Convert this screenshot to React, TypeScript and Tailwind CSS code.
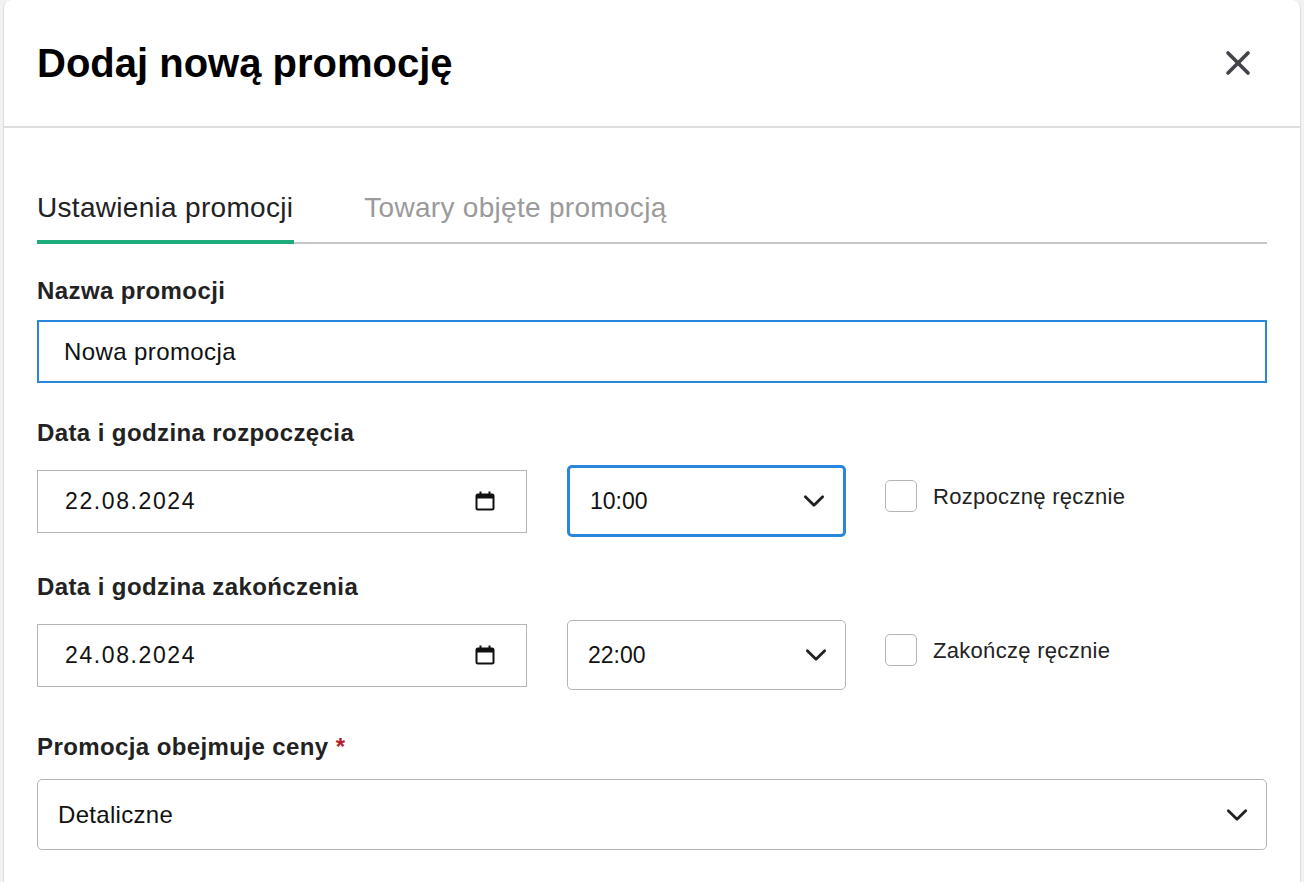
import { X } from 'lucide-react';

const font = { fontFamily: '"Liberation Sans", Arial, sans-serif' };

function Chevron() {
  return (
    <svg width="26" height="26" viewBox="0 0 24 24" fill="none" stroke="#222" strokeWidth="2.6" strokeLinecap="round" strokeLinejoin="round">
      <path d="M4 8l8 8 8-8" />
    </svg>
  );
}

function Calendar() {
  return (
    <svg width="22" height="22" viewBox="0 0 22 22" fill="none">
      <rect x="2.5" y="4.5" width="17" height="15" rx="1.5" stroke="#111" strokeWidth="2" />
      <rect x="2.5" y="4.5" width="17" height="4" fill="#111" />
      <rect x="5.5" y="1.5" width="2" height="4" fill="#111" />
      <rect x="14.5" y="1.5" width="2" height="4" fill="#111" />
    </svg>
  );
}

function DateRow({ label, date, time, check, focused }: { label: string; date: string; time: string; check: string; focused?: boolean }) {
  return (
    <div className="mt-[38px]">
      <div className="text-[24px] tracking-[0.4px] font-bold text-[#222] leading-none">{label}</div>
      <div className="flex items-center mt-[20px] h-[72px]">
        <div className="w-[490px] h-[63px] border border-[#b5b5b5] flex items-center justify-between pl-[27px] pr-[30px] text-[23px] text-[#111] tracking-[1.6px]">
          <span>{date}</span>
          <Calendar />
        </div>
        <div
          className={`ml-[40px] w-[279px] flex items-center justify-between pl-[20px] pr-[16px] text-[23px] text-[#111] rounded-[5px] ${
            focused ? 'h-[72px] border-[3px] border-[#2a86dc]' : 'h-[70px] border border-[#b5b5b5]'
          }`}
        >
          <span>{time}</span>
          <Chevron />
        </div>
        <div className="ml-[39px] flex items-center gap-[16px] -mt-[10px]">
          <div className="w-[32px] h-[32px] border border-[#b5b5b5] rounded-[5px] bg-white" />
          <span className="text-[22px] text-[#222] tracking-[0.3px]">{check}</span>
        </div>
      </div>
    </div>
  );
}

export default function App() {
  return (
    <div style={font} className="w-[1304px] h-[882px] bg-[#f2f2f2] overflow-hidden pl-[3px] pr-[3px]">
      <div className="bg-white h-full rounded-t-[8px] border-l border-r border-[#dcdcdc]">
        <div className="h-[128px] flex items-center justify-between pl-[33px] pr-[42px] border-b-2 border-[#dedede]">
          <h1 className="text-[40px] font-bold text-black">Dodaj nową promocję</h1>
          <X size={40} strokeWidth={2.2} color="#44434b" />
        </div>
        <div className="pl-[33px] pr-[33px]">
          <div className="flex border-b-2 border-[#c8c8c8] mt-[57px] h-[59px]">
            <div className="text-[28px] tracking-[0.3px] text-[#222] border-b-[4px] border-[#1ead7a] -mb-[2px] pr-[1px] pt-[2px]">Ustawienia promocji</div>
            <div className="text-[28px] tracking-[0.3px] text-[#9a9a9a] ml-[70px] pt-[2px]">Towary objęte promocją</div>
          </div>
          <div className="mt-[35px] text-[24px] tracking-[0.4px] font-bold text-[#222] leading-none">Nazwa promocji</div>
          <div className="mt-[17px] h-[63px] border-2 border-[#2a86dc] flex items-center pl-[25px] text-[24px] tracking-[0.4px] text-[#111]">Nowa promocja</div>
          <DateRow label="Data i godzina rozpoczęcia" date="22.08.2024" time="10:00" check="Rozpocznę ręcznie" focused />
          <div className="mt-[10px]">
            <DateRow label="Data i godzina zakończenia" date="24.08.2024" time="22:00" check="Zakończę ręcznie" />
          </div>
          <div className="mt-[44px] text-[24px] tracking-[0.4px] font-bold text-[#222] leading-none">
            Promocja obejmuje ceny <span className="text-[#b3202a]">*</span>
          </div>
          <div className="mt-[20px] h-[71px] border border-[#b5b5b5] rounded-[5px] flex items-center justify-between pl-[20px] pr-[16px] text-[24px] tracking-[0.3px] text-[#111]">
            <span>Detaliczne</span>
            <Chevron />
          </div>
        </div>
      </div>
    </div>
  );
}
